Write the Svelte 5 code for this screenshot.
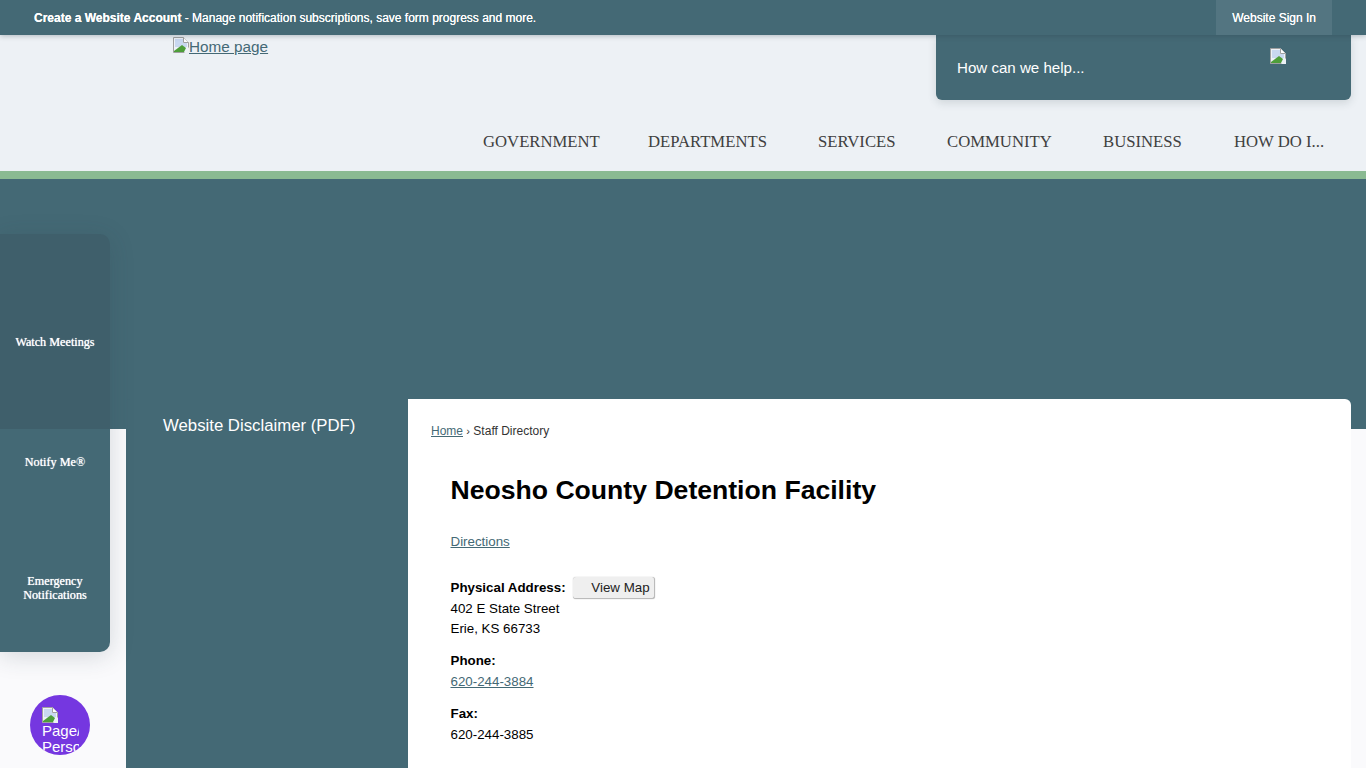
<script>
	const nav = [
		{ label: 'GOVERNMENT', width: 165 },
		{ label: 'DEPARTMENTS', width: 170 },
		{ label: 'SERVICES', width: 129 },
		{ label: 'COMMUNITY', width: 156 },
		{ label: 'BUSINESS', width: 131 },
		{ label: 'HOW DO I...', width: 115 }
	];
</script>

{#snippet brokenImage()}
	<svg class="broken" width="16" height="16" viewBox="0 0 16 16">
		<path d="M0.5 0.5H10.5L15.5 5.5V15.5H0.5Z" fill="#eef2f8" stroke="#a0a0a0" />
		<path d="M10.5 0.5V5.5H15.5" fill="#fff" stroke="#a0a0a0" />
		<path d="M2 2H10V6H14V10H2Z" fill="#c9d8f0" />
		<path d="M1 15V14L9 8L13 11L11 15Z" fill="#4e9e3a" />
		<path d="M11 16L16 10V16Z" fill="#edf1f5" />
	</svg>
{/snippet}

<div class="page">
	<div class="topbar">
		<p class="account"><strong>Create a Website Account</strong> - Manage notification subscriptions, save form progress and more.</p>
		<a class="signin" href="#top">Website Sign In</a>
	</div>

	<header>
		<div class="head-row">
			<a class="logo" href="#top">{@render brokenImage()}Home page</a>
			<div class="search">
				<span>How can we help...</span>
				<span class="search-icon">{@render brokenImage()}</span>
			</div>
		</div>
		<nav>
			{#each nav as item}
				<span class="nav-item" style="width: {item.width}px">{item.label}</span>
			{/each}
		</nav>
	</header>

	<div class="banner"></div>

	<div class="content">
		<aside class="side-menu">
			<a href="#top">Website Disclaimer (PDF)</a>
		</aside>
		<main>
			<div class="crumbs"><a href="#top">Home</a> <span class="sep">›</span> Staff Directory</div>
			<h1>Neosho County Detention Facility</h1>
			<p class="directions"><a href="#top">Directions</a></p>
			<div class="block address">
				<div class="address-head">
					<strong>Physical Address:</strong>
					<button>View Map</button>
				</div>
				<div class="address-line">402 E State Street</div>
				<div class="address-line">Erie, KS 66733</div>
			</div>
			<div class="block">
				<div><strong>Phone:</strong></div>
				<div><a href="#top">620-244-3884</a></div>
			</div>
			<div class="block">
				<div><strong>Fax:</strong></div>
				<div>620-244-3885</div>
			</div>
		</main>
	</div>

	<div class="quick-links">
		<div class="quick first">Watch Meetings</div>
		<div class="quick second">Notify Me®</div>
		<div class="quick third">Emergency<br />Notifications</div>
	</div>

	<div class="chat">
		{@render brokenImage()}
		<span>Page/<br />Perso</span>
	</div>
</div>

<style>
	:global(body) {
		margin: 0;
		overflow: hidden;
	}
	.page {
		position: relative;
		height: 768px;
		overflow: hidden;
		background: #fafafc;
		font-family: 'Liberation Sans', Arial, sans-serif;
		color: #000;
	}
	.topbar {
		position: relative;
		z-index: 2;
		display: flex;
		justify-content: space-between;
		align-items: center;
		height: 35px;
		padding: 0 34px;
		background: #446975;
		box-shadow: 0 1px 5px rgba(40, 60, 70, 0.3);
		color: #fff;
		font-size: 12px;
		text-shadow: 0 0 0.6px #fff;
	}
	.account {
		margin: 0;
	}
	.account strong {
		font-weight: bold;
	}
	.signin {
		display: flex;
		align-items: center;
		height: 35px;
		padding: 0 16px;
		background: #537581;
		color: #fff;
		text-decoration: none;
	}
	header {
		height: 136px;
		background: #edf1f5;
	}
	.head-row {
		display: flex;
		justify-content: space-between;
		align-items: flex-start;
		height: 65px;
		padding: 0 15px 0 173px;
	}
	.logo {
		margin-top: 2px;
		color: #446975;
		font-size: 15.3px;
		line-height: 20px;
	}
	.broken {
		display: inline-block;
		vertical-align: top;
	}
	.search {
		position: relative;
		z-index: 1;
		display: flex;
		justify-content: space-between;
		width: 394px;
		height: 65px;
		padding-left: 21px;
		background: #446975;
		border-radius: 0 0 6px 6px;
		box-shadow: 0 3px 8px rgba(40, 60, 70, 0.15);
		color: #fff;
		font-size: 15.1px;
		line-height: 65px;
	}
	.search-icon {
		margin: 13px 65px 0 0;
		line-height: 0;
	}
	nav {
		display: flex;
		justify-content: flex-end;
		height: 71px;
		padding-right: 17px;
	}
	.nav-item {
		margin-top: 32px;
		color: #404040;
		font-family: 'Liberation Serif', 'Times New Roman', serif;
		font-size: 16.7px;
		line-height: 20px;
		white-space: nowrap;
	}
	.banner {
		height: 258px;
		box-sizing: border-box;
		background: #446975;
		border-top: 8px solid #8aba92;
	}
	.content {
		position: relative;
		display: flex;
		margin: -30px 15px 0 126px;
		height: 369px;
	}
	.side-menu {
		width: 282px;
		flex: none;
		box-sizing: border-box;
		padding: 17px 0 0 37px;
		background: #446975;
		border-radius: 4px 0 0 0;
	}
	.side-menu a {
		color: #fff;
		font-size: 16.75px;
		line-height: 20px;
		text-decoration: none;
	}
	main {
		flex: 1;
		box-sizing: border-box;
		padding: 25px 0 0 23px;
		background: #fff;
		border-radius: 0 6px 0 0;
		font-size: 13.33px;
		line-height: 21px;
	}
	main a {
		color: #446975;
	}
	.crumbs {
		color: #333;
		font-size: 12px;
		line-height: 15px;
	}
	.sep {
		font-size: 11px;
	}
	h1 {
		margin: 35px 0 0 19.5px;
		font-size: 26.6px;
		font-weight: bold;
		line-height: 32px;
	}
	.directions {
		margin: 26px 0 0 19.5px;
		line-height: 20px;
	}
	.block {
		margin: 11px 0 0 19.5px;
	}
	.address {
		margin-top: 24px;
	}
	.address-line {
		line-height: 20px;
	}
	.address-head {
		display: flex;
		align-items: center;
		gap: 7px;
		height: 22px;
		margin-bottom: 1px;
	}
	button {
		width: 82px;
		height: 22px;
		margin-top: 1px;
		padding: 0 4px 0 0;
		background: #efefef;
		border: 1px solid #bbb;
		border-width: 0 1px 1px 0;
		border-radius: 3px;
		box-shadow: 0 0 1px rgba(0, 0, 0, 0.35);
		color: #222;
		font-family: inherit;
		font-size: 13.33px;
		text-align: right;
	}
	.quick-links {
		position: absolute;
		top: 234px;
		left: 0;
		width: 110px;
		height: 418px;
		border-radius: 0 10px 10px 0;
		overflow: hidden;
		box-shadow: 0 4px 24px rgba(40, 60, 70, 0.18);
		background: #446975;
		color: #fff;
		font-family: 'Liberation Serif', 'Times New Roman', serif;
		font-size: 12.2px;
		line-height: 14px;
		text-shadow: 0 0 0.7px #fff;
		text-align: center;
	}
	.quick {
		display: flex;
		align-items: center;
		justify-content: center;
		box-sizing: border-box;
	}
	.first {
		height: 195px;
		padding-top: 20px;
		background: #3f5f6b;
	}
	.second {
		height: 65px;
	}
	.third {
		height: 158px;
		padding-top: 30px;
	}
	.chat {
		position: absolute;
		top: 695px;
		left: 30px;
		width: 60px;
		height: 60px;
		box-sizing: border-box;
		padding: 12px 0 0 12px;
		border-radius: 50%;
		background: #7537e0;
		color: #fff;
		font-size: 15px;
		line-height: 16px;
		overflow: hidden;
	}
	.chat span {
		display: block;
		width: 37px;
		overflow: hidden;
	}
</style>
